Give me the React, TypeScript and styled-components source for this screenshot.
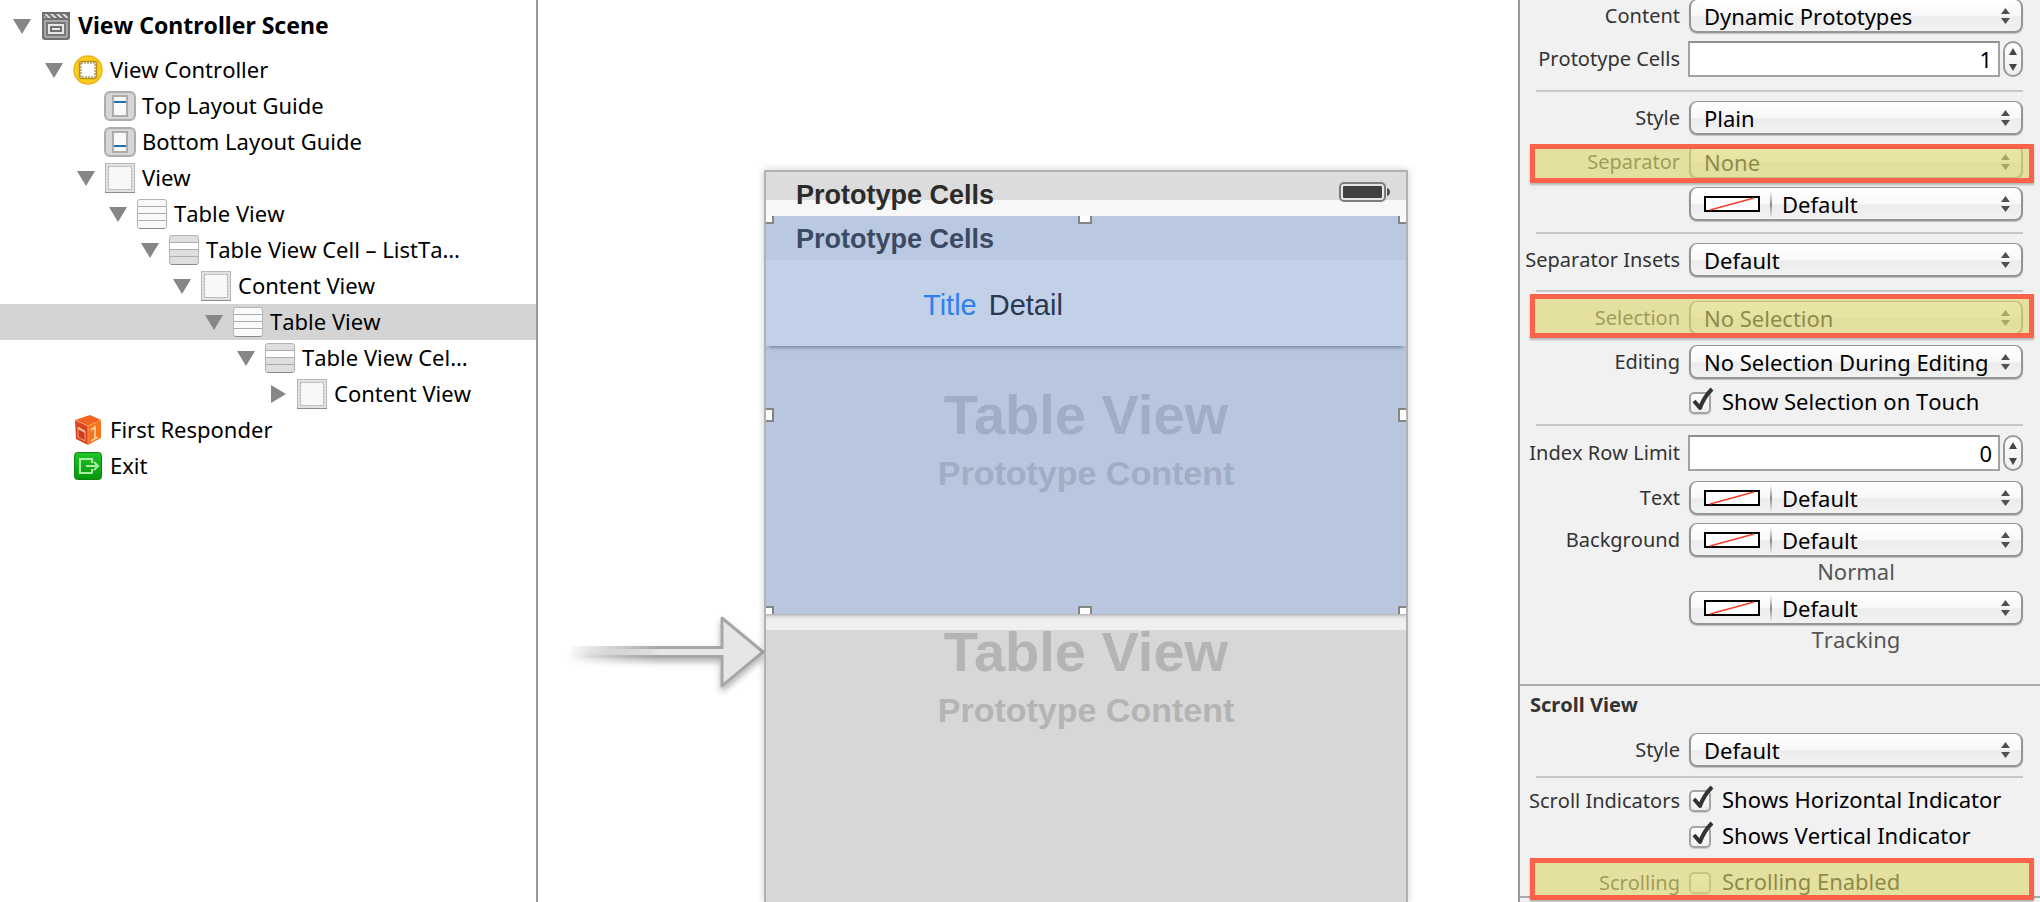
import React, { useId } from "react";
import styled, { createGlobalStyle, css } from "styled-components";

const UI_FONT = `"Noto Sans", "Open Sans", sans-serif`;
const CANVAS_FONT = `"Liberation Sans", Arial, sans-serif`;

const GlobalStyle = createGlobalStyle`
  * { box-sizing: border-box; }
  body { margin: 0; background: #fff; }
  button, input, select { font: inherit; font-kerning: inherit; color: inherit; margin: 0; }
`;

const Page = styled.div`
  display: flex;
  min-height: 100vh;
  font-family: ${UI_FONT};
  font-size: 22px;
  font-kerning: none;
  color: #000;
`;

/* ---------- Document outline ---------- */

const Outline = styled.nav`
  flex: none;
  width: 538px;
  border-right: 2px solid #999;
  background: #fff;
`;

const Tree = styled.ul`
  list-style: none;
  margin: 0;
  padding: 0;
`;

const TreeRow = styled.li<{ $level: number; $root?: boolean; $selected?: boolean }>`
  display: flex;
  align-items: center;
  height: ${(p) => (p.$root ? 52 : 36)}px;
  padding-left: ${(p) => 13 + p.$level * 32}px;
  background: ${(p) => (p.$selected ? "#d4d4d4" : "transparent")};
  font-size: ${(p) => (p.$root ? 23 : 22)}px;
  font-weight: ${(p) => (p.$root ? 700 : 400)};
  white-space: nowrap;
`;

const TreeLabel = styled.span`
  padding-bottom: 2px;
`;

const Disclosure = styled.button`
  display: flex;
  width: 18px;
  height: 18px;
  padding: 0;
  border: 0;
  background: none;
`;

const DisclosureGap = styled.span`
  width: 18px;
`;

const IconBox = styled.span`
  display: flex;
  justify-content: center;
  align-items: center;
  width: 32px;
  height: 32px;
  margin: 0 6px 0 9px;
`;

type IconName = "scene" | "controller" | "top" | "bottom" | "view" | "table" | "cell" | "responder" | "exit";

function SceneIcon() {
  return (
    <svg width="28" height="28" viewBox="0 0 28 28">
      <path d="M0 0h28v25a3 3 0 0 1-3 3H3a3 3 0 0 1-3-3z" fill="#707070" />
      <path d="M2 2h3l4 4H6zM8 2h3l4 4h-3zM14 2h3l4 4h-3zM20 2h3l3 3v1h-2zM2 4l2 2H2z" fill="#dcdcdc" />
      <path d="M2 8h24v16a2 2 0 0 1-2 2H4a2 2 0 0 1-2-2z" fill="#a8a8a8" />
      <path d="M5 11h18v12H5z" fill="#e8e8e8" stroke="#787878" strokeWidth="2" />
      <path d="M9 15h10v4H9z" fill="#e8e8e8" stroke="#707070" strokeWidth="2" />
    </svg>
  );
}

function ControllerIcon() {
  return (
    <svg width="30" height="30" viewBox="0 0 30 30">
      <circle cx="15" cy="15" r="14" fill="#fecd1b" stroke="#eab320" strokeWidth="1.500" />
      <rect x="6.500" y="6.500" width="17" height="17" rx="2" fill="#fff" stroke="#b8921c" strokeWidth="1.500" />
      <rect x="8" y="8" width="14" height="14" fill="none" stroke="#8c7430" strokeWidth="1" strokeDasharray="2 1" />
    </svg>
  );
}

function GuideIcon({ bottom }: { bottom?: boolean }) {
  return (
    <svg width="32" height="30" viewBox="0 0 32 30">
      <rect x="1" y="1" width="30" height="28" rx="5" fill="#d6d6d6" stroke="#adadad" strokeWidth="2" />
      <rect x="9" y="5" width="14" height="20" fill="#fafafa" stroke="#adadad" strokeWidth="2" />
      <path d={bottom ? "M10 19h12" : "M10 11h12"} stroke="#2470b0" strokeWidth="2" />
    </svg>
  );
}

function ViewIcon() {
  return (
    <svg width="30" height="30" viewBox="0 0 30 30">
      <rect x="0.500" y="0.500" width="29" height="29" fill="#e2e2e2" stroke="#b8b8b8" />
      <path d="M0 29.500h30" stroke="#8c8c8c" />
      <rect x="3.500" y="3.500" width="23" height="23" fill="#f8f8f8" stroke="#a6a6a6" strokeDasharray="2 1" />
    </svg>
  );
}

function TableIcon({ cell }: { cell?: boolean }) {
  return (
    <svg width="30" height="30" viewBox="0 0 30 30">
      <rect x="0.500" y="0.500" width="29" height="29" rx="2.500" fill={cell ? "#dedede" : "#fafafa"} stroke="#b4b4b4" />
      {cell && <path d="M1 8h28v6H1z" fill="#fff" />}
      <path d="M1 7.500h28M1 14.500h28M1 21.500h28" stroke="#acacac" />
      <path d="M2 29.500h26" stroke="#8a8a8a" />
    </svg>
  );
}

function ResponderIcon() {
  return (
    <svg width="28" height="32" viewBox="0 0 28 32">
      <path d="M1 6l15-5 11 5-13 6z" fill="#f2641f" />
      <path d="M1 6l13 6v19L2 25z" fill="#dc4420" />
      <path d="M14 12l13-6v18l-13 7z" fill="#f5751f" />
      <path d="M1 6l13 6 13-6M14 12v19" fill="none" stroke="#fa9a62" strokeWidth="1" />
      <path d="M4 13l7 4v10l-7-4z" fill="#d03a20" stroke="#f3a080" strokeWidth="1" />
      <path d="M4 13l7 4v2l-7-4z" fill="#f7c0a8" />
      <path d="M17 16l4-3v11M17 27l7-4" fill="none" stroke="#fcc38e" strokeWidth="2" />
    </svg>
  );
}

function ExitIcon() {
  return (
    <svg width="28" height="28" viewBox="0 0 28 28">
      <defs>
        <linearGradient id="exit" x1="0" y1="0" x2="0" y2="1">
          <stop offset="0" stopColor="#20c428" />
          <stop offset="1" stopColor="#08960e" />
        </linearGradient>
      </defs>
      <rect x="0.500" y="0.500" width="27" height="27" rx="3" fill="url(#exit)" stroke="#0b8a12" />
      <path d="M18 11V7H6v14h12v-4M12 14h12M20 10l4 4-4 4" fill="none" stroke="#a9eda5" strokeWidth="2" />
    </svg>
  );
}

const icons: Record<IconName, React.ReactNode> = {
  scene: <SceneIcon />,
  controller: <ControllerIcon />,
  top: <GuideIcon />,
  bottom: <GuideIcon bottom />,
  view: <ViewIcon />,
  table: <TableIcon />,
  cell: <TableIcon cell />,
  responder: <ResponderIcon />,
  exit: <ExitIcon />,
};

interface Node {
  label: string;
  icon: IconName;
  level: number;
  state?: "open" | "closed";
  selected?: boolean;
}

const nodes: Node[] = [
  { label: "View Controller Scene", icon: "scene", level: 0, state: "open" },
  { label: "View Controller", icon: "controller", level: 1, state: "open" },
  { label: "Top Layout Guide", icon: "top", level: 2 },
  { label: "Bottom Layout Guide", icon: "bottom", level: 2 },
  { label: "View", icon: "view", level: 2, state: "open" },
  { label: "Table View", icon: "table", level: 3, state: "open" },
  { label: "Table View Cell – ListTa…", icon: "cell", level: 4, state: "open" },
  { label: "Content View", icon: "view", level: 5, state: "open" },
  { label: "Table View", icon: "table", level: 6, state: "open", selected: true },
  { label: "Table View Cel…", icon: "cell", level: 7, state: "open" },
  { label: "Content View", icon: "view", level: 8, state: "closed" },
  { label: "First Responder", icon: "responder", level: 1 },
  { label: "Exit", icon: "exit", level: 1 },
];

function DocumentOutline() {
  return (
    <Outline aria-label="Document outline">
      <Tree>
        {nodes.map((n, i) => (
          <TreeRow key={i} $level={n.level} $root={n.level === 0} $selected={n.selected}>
            {n.state ? (
              <Disclosure aria-label={`Toggle ${n.label}`} aria-expanded={n.state === "open"}>
                <svg width="18" height="18" viewBox="0 0 18 18">
                  <path d={n.state === "open" ? "M0 2h18l-9 15z" : "M2 0v18l15-9z"} fill="#868686" />
                </svg>
              </Disclosure>
            ) : (
              <DisclosureGap />
            )}
            <IconBox>{icons[n.icon]}</IconBox>
            <TreeLabel>{n.label}</TreeLabel>
          </TreeRow>
        ))}
      </Tree>
    </Outline>
  );
}

/* ---------- Canvas ---------- */

const Canvas = styled.main`
  flex: 1;
  min-width: 0;
  display: flex;
  justify-content: flex-end;
  padding: 170px 110px 0 0;
  background: #fff;
  font-family: ${CANVAS_FONT};
  font-kerning: auto;
`;

const EntryArrow = styled.svg`
  flex: none;
  align-self: flex-start;
  margin-top: 442px;
`;

const Device = styled.section`
  flex: none;
  display: flex;
  flex-direction: column;
  width: 644px;
  border: 2px solid #b2b2b2;
  border-bottom: 0;
  box-shadow: 0 0 8px rgba(0, 0, 0, 0.2);
`;

const CellsHeader = styled.header<{ $nested?: boolean }>`
  flex: none;
  display: flex;
  justify-content: space-between;
  height: 44px;
  padding: 0 16px 0 30px;
  font-size: 27px;
  font-weight: 700;
  line-height: 46px;
  color: ${(p) => (p.$nested ? "#3b4a62" : "#2b2b2b")};
  background: ${(p) => (p.$nested ? "#bac9e1" : "linear-gradient(#dcdcdc 28px, #f7f7f7 28px)")};
`;

const Battery = styled.svg`
  margin-top: 10px;
`;

const NestedTable = styled.div`
  position: relative;
  flex: none;
  display: flex;
  flex-direction: column;
  height: 398px;
  overflow: hidden;
  background: #b8c6de;
`;

const DetailCell = styled.div`
  flex: none;
  display: flex;
  align-items: center;
  gap: 12px;
  height: 86px;
  padding: 4px 0 0 157px;
  font-size: 29px;
  color: #2a3850;
  background: #c2d0e8;
  box-shadow: 0 4px 4px -3px rgba(40, 60, 100, 0.6);
`;

const CellTitle = styled.span`
  color: #2f80ee;
`;

const Placeholder = styled.div<{ $tone: string }>`
  display: flex;
  flex-direction: column;
  align-items: center;
  gap: 12px;
  color: ${(p) => p.$tone};
  font-weight: 700;
`;

const PlaceholderTitle = styled.div`
  font-size: 56px;
  line-height: 56px;
`;

const PlaceholderText = styled.div`
  font-size: 34px;
  line-height: 36px;
`;

const NestedBody = styled.div`
  padding-top: 41px;
`;

const OuterBody = styled.div`
  flex: 1;
  padding-top: 10px;
  background: linear-gradient(#b4b4b4, #e2e2e2 3px, #efefef 6px, #efefef 16px, #d7d7d7 16px);
`;

const Handle = styled.i<{ $x: "left" | "center" | "right"; $y: "top" | "middle" | "bottom" }>`
  position: absolute;
  width: 14px;
  height: 14px;
  border: 2px solid #858585;
  background: #fff;
  ${(p) => p.$x === "left" && css`left: -6px;`}
  ${(p) => p.$x === "right" && css`right: -6px;`}
  ${(p) => p.$x === "center" && css`left: calc(50% - 8px);`}
  ${(p) => p.$y === "top" && css`top: -6px;`}
  ${(p) => p.$y === "bottom" && css`bottom: -6px;`}
  ${(p) => p.$y === "middle" && css`top: calc(50% - 7px);`}
`;

function TablePlaceholder({ tone }: { tone: string }) {
  return (
    <Placeholder $tone={tone}>
      <PlaceholderTitle>Table View</PlaceholderTitle>
      <PlaceholderText>Prototype Content</PlaceholderText>
    </Placeholder>
  );
}

function StoryboardCanvas() {
  return (
    <Canvas>
      <EntryArrow width="200" height="84" viewBox="0 0 200 84">
        <defs>
          <linearGradient id="edge" x1="0" y1="0" x2="1" y2="0">
            <stop offset="0" stopColor="#a6a6a6" stopOpacity="0" />
            <stop offset="0.600" stopColor="#a6a6a6" />
          </linearGradient>
          <linearGradient id="shaft" x1="0" y1="0" x2="1" y2="0">
            <stop offset="0" stopColor="#e6e6e6" stopOpacity="0" />
            <stop offset="0.600" stopColor="#e6e6e6" />
          </linearGradient>
          <filter id="soft" x="-10%" y="-10%" width="120%" height="130%">
            <feDropShadow dx="0" dy="4" stdDeviation="3" floodOpacity="0.3" />
          </filter>
        </defs>
        <g filter="url(#soft)">
          <path d="M4 34h154v12H4z" fill="url(#edge)" />
          <path d="M158 6l41 34-41 34z" fill="#e6e6e6" stroke="#a6a6a6" strokeWidth="3" strokeLinejoin="round" />
          <path d="M4 37h156v6H4z" fill="url(#shaft)" />
        </g>
      </EntryArrow>
      <Device>
        <CellsHeader>
          Prototype Cells
          <Battery width="51" height="20" viewBox="0 0 51 20">
            <rect x="1" y="1" width="45" height="18" rx="4" fill="#e6e6e6" stroke="#7c7c7c" strokeWidth="2" />
            <rect x="4" y="4" width="39" height="12" rx="1" fill="#404040" />
            <path d="M48 6q3 1 3 4t-3 4z" fill="#505050" />
          </Battery>
        </CellsHeader>
        <NestedTable>
          <CellsHeader $nested>Prototype Cells</CellsHeader>
          <DetailCell>
            <CellTitle>Title</CellTitle>
            <span>Detail</span>
          </DetailCell>
          <NestedBody>
            <TablePlaceholder tone="#9fadc5" />
          </NestedBody>
          <Handle $x="left" $y="top" />
          <Handle $x="center" $y="top" />
          <Handle $x="right" $y="top" />
          <Handle $x="left" $y="middle" />
          <Handle $x="right" $y="middle" />
          <Handle $x="left" $y="bottom" />
          <Handle $x="center" $y="bottom" />
          <Handle $x="right" $y="bottom" />
        </NestedTable>
        <OuterBody>
          <TablePlaceholder tone="#b4b4b4" />
        </OuterBody>
      </Device>
    </Canvas>
  );
}

/* ---------- Attributes inspector ---------- */

const Inspector = styled.aside`
  flex: none;
  width: 522px;
  border-left: 2px solid #999;
  background: #f1f1f1;
`;

const Section = styled.section`
  padding: 0 17px 0 16px;
`;

const Row = styled.div<{ $mt: number }>`
  position: relative;
  display: grid;
  grid-template-columns: 144px minmax(0, 1fr);
  column-gap: 9px;
  align-items: center;
  margin-top: ${(p) => p.$mt}px;
`;

const Label = styled.label`
  justify-self: end;
  font-size: 20px;
  line-height: 22px;
  color: #333;
  white-space: nowrap;
`;

const Divider = styled.hr<{ $mt: number }>`
  height: 2px;
  margin: ${(p) => p.$mt}px 0 0;
  border: 0;
  background: #c8c8c8;
`;

const SectionLine = styled.hr<{ $mt: number }>`
  height: 2px;
  margin: ${(p) => p.$mt}px 0 0;
  border: 0;
  background: #aaa;
`;

const SectionTitle = styled.h2`
  margin: 4px 0 0 -6px;
  font-size: 20px;
  line-height: 30px;
  font-weight: 700;
  color: #333;
`;

const PopUp = styled.div`
  position: relative;
`;

const SelectBox = styled.select<{ $swatch?: boolean }>`
  appearance: none;
  display: block;
  width: 100%;
  height: 34px;
  padding: 0 26px 0 ${(p) => (p.$swatch ? 91 : 13)}px;
  border: 2px solid #959595;
  border-top-width: 1px;
  border-radius: 8px;
  background: linear-gradient(#fff, #f8f8f8 50%, #ececec 55%, #f2f2f2);
  box-shadow: 0 1px 1px rgba(0, 0, 0, 0.2);
`;

const Arrows = styled.svg`
  position: absolute;
  right: 13px;
  top: 9px;
  pointer-events: none;
`;

const Swatch = styled.svg`
  position: absolute;
  left: 15px;
  top: 4px;
  pointer-events: none;
`;

const NumberField = styled.div`
  display: flex;
  gap: 3px;
  margin-left: -1px;
`;

const NumberBox = styled.input`
  flex: 1;
  min-width: 0;
  height: 36px;
  padding: 0 6px;
  border: 2px solid #a2a2a2;
  border-top-color: #8e8e8e;
  background: #fff;
  text-align: right;
`;

const Stepper = styled.div`
  flex: none;
  display: flex;
  flex-direction: column;
  width: 20px;
  height: 36px;
  border: 2px solid #9a9a9a;
  border-radius: 10px;
  background: linear-gradient(#fff, #eee);
  overflow: hidden;
`;

const StepButton = styled.button`
  flex: 1;
  display: flex;
  align-items: center;
  justify-content: center;
  padding: 0;
  border: 0;
  background: none;
`;

const CheckLabel = styled.label`
  position: relative;
  display: flex;
  align-items: center;
  gap: 11px;
  height: 22px;
  white-space: nowrap;
`;

const CheckText = styled.span`
  padding-bottom: 4px;
`;

const CheckBox = styled.input`
  appearance: none;
  flex: none;
  width: 22px;
  height: 22px;
  border: 2px solid #a4a4a4;
  border-radius: 5px;
  background: linear-gradient(#fff, #eee);
  box-shadow: 0 1px 1px rgba(0, 0, 0, 0.15);
`;

const Tick = styled.svg`
  position: absolute;
  left: 3px;
  top: -5px;
  pointer-events: none;
`;

const Caption = styled.div`
  margin: 0 0 6px 153px;
  text-align: center;
  line-height: 28px;
  color: #555;
`;

const Highlight = styled.div<{ $top: number; $height: number }>`
  position: absolute;
  z-index: 1;
  left: -6px;
  right: -11px;
  top: ${(p) => p.$top}px;
  height: ${(p) => p.$height}px;
  border: 5px solid #fc624a;
  background: rgba(220, 214, 112, 0.64);
  box-shadow: 0 2px 2px rgba(0, 0, 0, 0.25);
  pointer-events: none;
`;

interface SelectRowProps {
  label?: string;
  name?: string;
  value: string;
  mt: number;
  swatch?: boolean;
  children?: React.ReactNode;
}

function SelectRow({ label, name, value, mt, swatch, children }: SelectRowProps) {
  const id = useId();
  return (
    <Row $mt={mt}>
      {label ? <Label htmlFor={id}>{label}</Label> : <span />}
      <PopUp>
        <SelectBox id={id} $swatch={swatch} aria-label={label ? undefined : name} defaultValue={value}>
          <option>{value}</option>
        </SelectBox>
        {swatch && (
          <Swatch width="70" height="27" viewBox="0 0 70 27">
            <defs>
              <linearGradient id={`${id}-rule`} x1="0" y1="0" x2="0" y2="1">
                <stop offset="0" stopColor="#999" stopOpacity="0" />
                <stop offset="0.500" stopColor="#888" />
                <stop offset="1" stopColor="#999" stopOpacity="0" />
              </linearGradient>
            </defs>
            <rect x="1" y="6" width="54" height="14" fill="#fff" stroke="#000" strokeWidth="2" />
            <path d="M6 19L50 7" stroke="#f43d28" strokeWidth="1.300" />
            <rect x="66" y="0" width="2" height="27" fill={`url(#${id}-rule)`} />
          </Swatch>
        )}
        <Arrows width="9" height="16" viewBox="0 0 9 16">
          <path d="M0 6L4.500 0L9 6zM0 10L4.500 16L9 10z" fill="#505050" />
        </Arrows>
      </PopUp>
      {children}
    </Row>
  );
}

function NumberRow({ label, value, mt }: { label: string; value: string; mt: number }) {
  const id = useId();
  return (
    <Row $mt={mt}>
      <Label htmlFor={id}>{label}</Label>
      <NumberField>
        <NumberBox id={id} type="text" inputMode="numeric" defaultValue={value} />
        <Stepper>
          <StepButton aria-label={`Increase ${label}`}>
            <svg width="8" height="7" viewBox="0 0 8 7">
              <path d="M0 7L4 0L8 7z" fill="#444" />
            </svg>
          </StepButton>
          <StepButton aria-label={`Decrease ${label}`}>
            <svg width="8" height="7" viewBox="0 0 8 7">
              <path d="M0 0L4 7L8 0z" fill="#444" />
            </svg>
          </StepButton>
        </Stepper>
      </NumberField>
    </Row>
  );
}

interface CheckRowProps {
  label?: string;
  text: string;
  checked?: boolean;
  mt: number;
  children?: React.ReactNode;
}

function CheckRow({ label, text, checked, mt, children }: CheckRowProps) {
  const id = useId();
  return (
    <Row $mt={mt}>
      {label ? <Label htmlFor={id}>{label}</Label> : <span />}
      <CheckLabel>
        <CheckBox id={id} type="checkbox" defaultChecked={checked} />
        {checked && (
          <Tick width="23" height="24" viewBox="0 0 23 24">
            <path d="M2 14L8 21Q12 10 20 2" fill="none" stroke="#333" strokeWidth="4" strokeLinejoin="round" />
          </Tick>
        )}
        <CheckText>{text}</CheckText>
      </CheckLabel>
      {children}
    </Row>
  );
}

function AttributesInspector() {
  return (
    <Inspector aria-label="Attributes inspector">
      <Section>
        <SelectRow label="Content" value="Dynamic Prototypes" mt={-1} />
        <NumberRow label="Prototype Cells" value="1" mt={8} />
        <Divider $mt={13} />
        <SelectRow label="Style" value="Plain" mt={9} />
        <SelectRow label="Separator" value="None" mt={10}>
          <Highlight $top={-1} $height={39} />
        </SelectRow>
        <SelectRow name="Separator color" value="Default" mt={8} swatch />
        <Divider $mt={11} />
        <SelectRow label="Separator Insets" value="Default" mt={9} />
        <Divider $mt={13} />
        <SelectRow label="Selection" value="No Selection" mt={9}>
          <Highlight $top={-7} $height={44} />
        </SelectRow>
        <SelectRow label="Editing" value="No Selection During Editing" mt={10} />
        <CheckRow text="Show Selection on Touch" checked mt={13} />
        <Divider $mt={10} />
        <NumberRow label="Index Row Limit" value="0" mt={9} />
        <SelectRow label="Text" value="Default" mt={10} swatch />
        <SelectRow label="Background" value="Default" mt={8} swatch />
        <Caption>Normal</Caption>
        <SelectRow name="Tracking background" value="Default" mt={0} swatch />
        <Caption>Tracking</Caption>
      </Section>
      <SectionLine $mt={31} />
      <Section>
        <SectionTitle>Scroll View</SectionTitle>
        <SelectRow label="Style" value="Default" mt={13} />
        <Divider $mt={9} />
        <CheckRow label="Scroll Indicators" text="Shows Horizontal Indicator" checked mt={12} />
        <CheckRow text="Shows Vertical Indicator" checked mt={14} />
        <CheckRow label="Scrolling" text="Scrolling Enabled" mt={24}>
          <Highlight $top={-14} $height={42} />
        </CheckRow>
      </Section>
      <SectionLine $mt={2} />
    </Inspector>
  );
}

export default function App() {
  return (
    <Page>
      <GlobalStyle />
      <DocumentOutline />
      <StoryboardCanvas />
      <AttributesInspector />
    </Page>
  );
}
